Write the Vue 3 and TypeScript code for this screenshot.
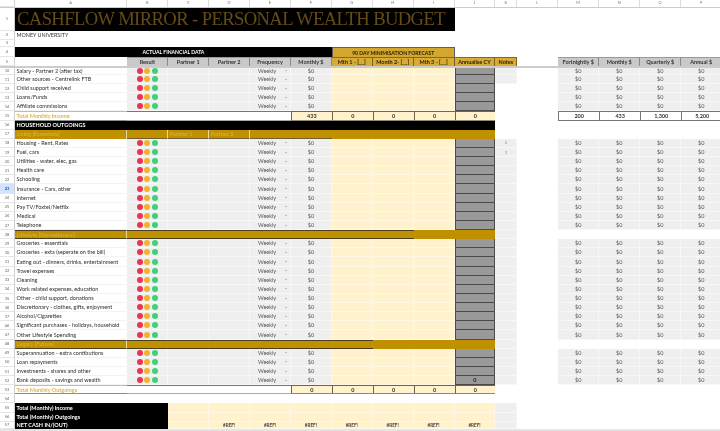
<script setup lang="ts">
interface Cell { c: string; t?: string; s?: number; k?: string }
interface Row { id: number; r: string; cells: Cell[] }

const letters = ['A','B','C','D','E','F','G','H','I','J','K','L','M','N','O','P']
let uid = 0
const num = (n: string, extra = ''): Cell => ({ c: 'num ' + extra, t: n })
const blanks = (c: string, count: number): Cell[] => Array.from({ length: count }, () => ({ c }))
const row = (r: string, cells: Cell[]): Row => ({ id: uid++, r, cells })

function item(n: string, label: string, opts: { k?: string; kGrey?: boolean; j?: string; r?: string; sel?: boolean } = {}): Row {
  return row(opts.r ?? 'std', [
    num(n, opts.sel ? 'sel' : ''),
    { c: 'label', t: label },
    { c: 'grey', k: 'dots' },
    { c: 'grey' }, { c: 'grey' },
    { c: 'grey', k: 'freq' },
    { c: 'grey ctr', t: '$0' },
    ...blanks('cream', 3),
    { c: 'dark ctr', t: opts.j },
    { c: (opts.kGrey ? 'grey ' : '') + 'note', t: opts.k },
    { c: '' },
    ...['$0', '$0', '$0', '$0'].map((t) => ({ c: 'grey ctr', t }))
  ])
}

function band(n: string, label: string, lined: number): Row {
  const cols: Cell[] = [{ c: 'gold tan-r sep' + (lined ? ' lined' : ''), t: label }]
  for (let i = 0; i < 9; i++) {
    cols.push({ c: 'gold' + (i < lined - 1 ? ' lined' : '') })
  }
  return row('std', [num(n), ...cols, { c: 'grey' }, { c: '' }, ...blanks('', 4)])
}

function total(n: string, label: string, f: string, tail: string[]): Row {
  return row('std', [
    num(n),
    { c: 'tot-label', t: label },
    ...blanks('tot-blank', 4),
    { c: 'tot ctr', t: f },
    ...['0', '0', '0', '0'].map((t) => ({ c: 'tot ctr', t })),
    { c: '' }, { c: '' },
    ...(tail.length ? tail.map((t) => ({ c: 'tot-w ctr', t })) : blanks('', 4))
  ])
}

const rows: Row[] = [
  row('title', [num('1'), { c: 'title', t: 'CASHFLOW MIRROR - PERSONAL WEALTH BUDGET', s: 9 }]),
  row('r2', [num('2'), { c: 'plain', t: 'MONEY UNIVERSITY' }]),
  row('r3', [num('3')]),
  row('r4', [
    num('4'),
    { c: 'black-h', t: 'ACTUAL FINANCIAL DATA', s: 6 },
    { c: 'gold-h', t: '90 DAY MINIMISATION FORECAST', s: 3 }
  ]),
  row('r5', [
    num('5'), { c: '' },
    ...['Result', 'Partner 1', 'Partner 2', 'Frequency', 'Monthly $'].map((t) => ({ c: 'head', t })),
    ...['Mth 1 - [__]', 'Month 2- [__]', 'Mth 3 - [__]', 'Annualise CY', 'Notes'].map((t) => ({ c: 'head-g', t })),
    { c: '' },
    ...['Fortnightly $', 'Monthly $', 'Quarterly $', 'Annual $'].map((t) => ({ c: 'head', t }))
  ]),
  item('10', 'Salary - Partner 2 (after tax)', { r: 'clip', kGrey: true }),
  item('11', 'Other sources - Centrelink FTB', { kGrey: true }),
  item('12', 'Child support received'),
  item('13', 'Loans/Funds'),
  item('14', 'Affiliate commissions'),
  total('15', 'Total Monthly Income', '433', ['200', '433', '1,300', '5,200']),
  row('std', [num('16'), { c: 'black-l', t: 'HOUSEHOLD OUTGOINGS', s: 10 }]),
  row('std', [
    num('17'),
    { c: 'gold tan-r sep', t: 'Living [Essentials]' },
    { c: 'gold sep under' },
    { c: 'gold tan-r sep under', t: 'Partner 1' },
    { c: 'gold tan-r sep under', t: 'Partner 2' },
    { c: 'gold under' }, { c: 'gold under' },
    ...blanks('gold', 4)
  ]),
  item('18', 'Housing - Rent, Rates', { k: '2', kGrey: true }),
  item('19', 'Fuel, cars', { k: '3', kGrey: true }),
  item('20', 'Utilities - water, elec, gas', { kGrey: true }),
  item('21', 'Health care', { kGrey: true }),
  item('22', 'Schooling', { kGrey: true }),
  item('23', 'Insurance - Cars, other', { kGrey: true, sel: true }),
  item('24', 'Internet', { kGrey: true }),
  item('25', 'Pay TV/Foxtel/Netflix', { kGrey: true }),
  item('26', 'Medical', { kGrey: true }),
  item('27', 'Telephone', { kGrey: true }),
  band('28', 'Lifestyle [Discretionary]', 8),
  item('29', 'Groceries - essentials', { kGrey: true }),
  item('30', 'Groceries - exta (seperate on the bill)', { kGrey: true }),
  item('31', 'Eating out - dinners, drinks, entertainment', { kGrey: true }),
  item('32', 'Travel expenses', { kGrey: true }),
  item('33', 'Cleaning', { kGrey: true }),
  item('34', 'Work related expenses, education', { kGrey: true }),
  item('35', 'Other - child support, donations', { kGrey: true }),
  item('36', 'Discretionary - clothes, gifts, enjoyment', { kGrey: true }),
  item('37', 'Alcohol/Cigarettes', { kGrey: true }),
  item('46', 'Significant purchases - holidays, household', { kGrey: true }),
  item('47', 'Other Lifestyle Spending', { kGrey: true }),
  band('48', 'Legacy [Future]', 7),
  item('49', 'Superannuation -  extra contibutions', { kGrey: true }),
  item('50', 'Loan repayments', { kGrey: true }),
  item('51', 'Investments - shares and other', { kGrey: true }),
  item('52', 'Bank deposits - savings and wealth', { kGrey: true, j: '0' }),
  total('53', 'Total Monthly Outgoings', '0', []),
  row('std', [num('54')]),
  row('std', [num('55'), { c: 'black-s', t: 'Total (Monthly) Income', s: 2 }, ...blanks('cream', 8), { c: 'grey' }]),
  row('std', [num('56'), { c: 'black-s', t: 'Total (Monthly) Outgoings', s: 2 }, ...blanks('cream', 8), { c: 'grey' }]),
  row('last', [
    num('57'),
    { c: 'black-s', t: 'NET CASH  IN/(OUT)', s: 2 },
    { c: 'cream' },
    ...Array.from({ length: 7 }, () => ({ c: 'cream ctr ref', t: '#REF!' })),
    { c: 'grey' }
  ])
]
</script>

<template>
  <div class="sheet">
    <div class="grid letters">
      <div class="num corner"></div>
      <div v-for="l in letters" :key="l" class="letter">{{ l }}</div>
    </div>
    <template v-for="(rw, i) in rows" :key="rw.id">
      <div v-if="i === 5" class="freeze"></div>
      <div class="grid" :class="rw.r">
        <div
          v-for="(cell, j) in rw.cells"
          :key="j"
          class="cell"
          :class="cell.c"
          :style="cell.s ? { gridColumn: 'span ' + cell.s } : undefined"
        >
          <span v-if="cell.k === 'dots'" class="dots">
            <i class="dot red"></i><i class="dot amber"></i><i class="dot green"></i>
          </span>
          <span v-else-if="cell.k === 'freq'" class="freq">
            <span>Weekly</span><em class="arrow"></em>
          </span>
          <template v-else>{{ cell.t }}</template>
        </div>
      </div>
    </template>
    <div class="foot"></div>
  </div>
</template>

<style>
html, body { margin: 0; background: #fff; overflow: hidden; }
</style>

<style scoped>
.sheet {
  width: 720px;
  height: 431px;
  overflow: hidden;
  background: #fff;
  font-family: Lato, "Liberation Sans", sans-serif;
  font-size: 5.5px;
  color: #333;
  filter: blur(0.25px);
}
.grid {
  display: grid;
  grid-template-columns: 15px 112.4px repeat(9, 40.9px) 22px 40.8px repeat(4, 41px);
  height: 9.14px;
  width: 723px;
}
.letters { height: 7.5px; border-bottom: 1px solid #ccc; box-sizing: border-box; }
.letter {
  font-size: 4px;
  color: #777;
  text-align: center;
  line-height: 6.5px;
  border-right: 1px solid #ddd;
}
.grid.title { height: 23.5px; }
.r2 { height: 8.5px; }
.r3 { height: 7.5px; }
.r4 { height: 10px; }
.r5 { height: 9px; }
.clip { height: 7.4px; }
.last { height: 7.5px; }
.freeze { height: 1.6px; background: #ccc; }
.foot { height: 3px; background: #e4e4e4; }

.cell {
  box-sizing: border-box;
  min-width: 0;
  white-space: nowrap;
  overflow: hidden;
  display: flex;
  align-items: center;
}
.num {
  justify-content: center;
  font-size: 4px;
  color: #666;
  background: #fff;
  border-right: 1px solid #d0d0d0;
  border-bottom: 1px solid #e6e6e6;
}
.corner { box-sizing: border-box; }
.sel { background: #d3e3fd; color: #0b57d0; font-weight: 700; }
.ctr { justify-content: center; }

.cell.title {
  background: #000;
  color: #654c14;
  font-family: "Liberation Serif", serif;
  font-size: 18.6px;
  letter-spacing: -0.6px;
  padding-left: 2px;
}
.plain { padding-left: 1.5px; color: #333; font-size: 5.4px; }
.black-h {
  background: #000;
  color: #fff;
  font-weight: 700;
  font-size: 5.1px;
  justify-content: center;
}
.gold-h {
  background: #d3a62f;
  color: #2b2208;
  font-weight: 700;
  font-size: 5.1px;
  justify-content: center;
  border: 1px solid #5e5e5e;
  border-bottom: 0;
}
.head {
  background: #c9c9c9;
  color: #333;
  font-weight: 700;
  justify-content: center;
  border-right: 1px solid #8a8a8a;
  border-top: 1px solid #9a9a9a;
}
.head-g {
  background: #d8ab35;
  color: #2b2208;
  font-weight: 700;
  justify-content: center;
  border-right: 1px solid #7a6220;
  border-top: 1px solid #7a6a3a;
}
.label {
  padding-left: 1.5px;
  color: #2e2e2e;
  border-bottom: 1px solid #f3f3f3;
}
.grey {
  background: #efefef;
  border-right: 1px solid #f7f7f7;
  border-bottom: 1px solid #f7f7f7;
  color: #555;
}
.cream {
  background: #fff2cc;
  border-right: 1px solid #fff8e4;
  border-bottom: 1px solid #fff8e4;
}
.ref { color: #444; font-size: 4.6px; font-weight: 700; }
.dark {
  background: #999;
  border: 1px solid #4a4a4a;
  border-top: 0;
  color: #222;
  font-weight: 700;
}
.note { justify-content: center; font-size: 4px; color: #888; }
.dots { display: flex; gap: 1.5px; width: 100%; justify-content: center; }
.dot { width: 6px; height: 6px; border-radius: 50%; display: block; }
.red { background: #ea3550; }
.amber { background: #f0b32e; }
.green { background: #3fd07b; }
.freq {
  display: flex;
  width: 100%;
  justify-content: space-between;
  align-items: center;
  padding: 0 3px 0 8px;
  box-sizing: border-box;
  color: #555;
}
.arrow {
  width: 0;
  height: 0;
  border-left: 1.4px solid transparent;
  border-right: 1.4px solid transparent;
  border-top: 1.6px solid #888;
}
.tot-label {
  padding-left: 1.5px;
  color: #e0b548;
  font-weight: 700;
  border-top: 1px solid #b4b8d4;
  border-bottom: 1px solid #8c8c8c;
}
.tot-blank {
  border-top: 1px solid #777;
  border-bottom: 1px solid #aaa;
}
.tot {
  background: #fff2cc;
  color: #333;
  font-weight: 700;
  border-top: 1px solid #6e6650;
  border-bottom: 1px solid #8f8a78;
  border-left: 1px solid #6e6650;
}
.tot-w {
  color: #333;
  font-weight: 700;
  border: 1px solid #777;
  border-right: 0;
}
.black-l,
.black-s {
  background: #000;
  color: #fff;
  font-weight: 700;
  padding-left: 1.5px;
}
.gold { background: #bf9000; }
.tan-r { color: #d6ad3a; padding-left: 1.5px; font-weight: 700; }
.sep { border-right: 1px solid #e8d8a0; }
.under { border-bottom: 1px solid #6e6030; }
.lined { border-top: 1px solid #4a4020; border-bottom: 1px solid #4a4020; }
</style>
